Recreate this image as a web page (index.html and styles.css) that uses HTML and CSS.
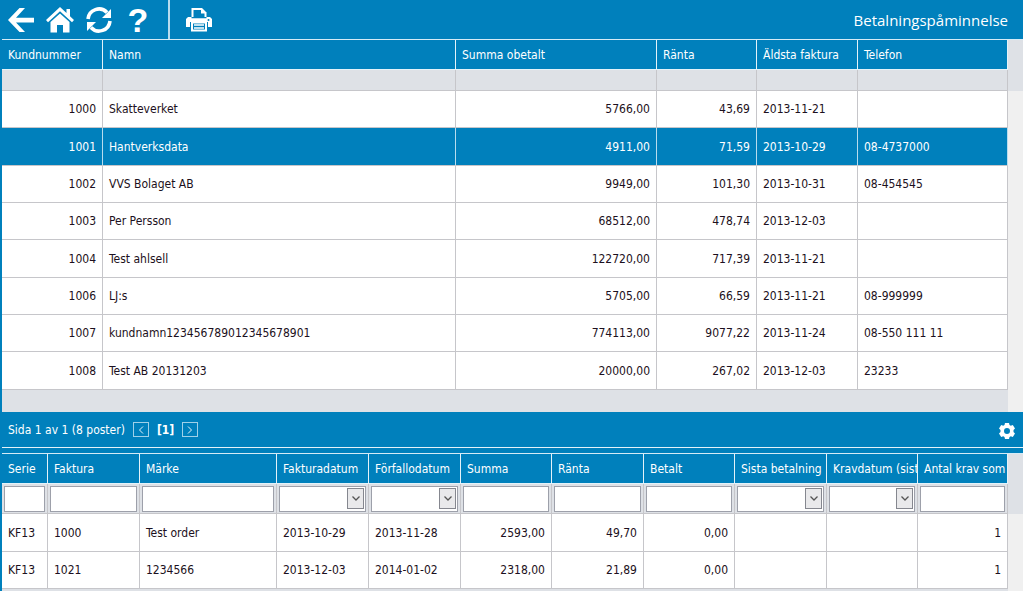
FILE: index.html
```html
<!DOCTYPE html>
<html lang="sv">
<head>
<meta charset="utf-8">
<title>Betalningspåminnelse</title>
<link rel="stylesheet" href="styles.css">
</head>
<body>
<header class="toolbar">
  <nav class="tools" aria-label="Verktyg">
    <button class="tool" type="button" aria-label="Tillbaka"><svg width="26" height="26" viewBox="0 0 26 26"><path d="M0 13 11.500 1H17L8 10.800h18v4.600H8L17 25h-5.500z" fill="#fff"/></svg></button>
    <button class="tool" type="button" aria-label="Hem"><svg width="28" height="26" viewBox="0 0 28 26"><path d="M14 0 0 13l2 2.200L14 4.200l12 11L28 13l-4-3.700V2h-3.500v4z" fill="#fff"/><path d="M14 6.500 4.500 15v10.500H11V18h6v7.500h6.500V15z" fill="#fff"/></svg></button>
    <button class="tool" type="button" aria-label="Uppdatera"><svg width="26" height="26" viewBox="0 0 26 26"><path d="M2 12A11 11 0 0 1 21 5.500" fill="none" stroke="#fff" stroke-width="3.600"/><path d="M25 2v9h-9z" fill="#fff"/><path d="M24 14A11 11 0 0 1 5 20.500" fill="none" stroke="#fff" stroke-width="3.600"/><path d="M1 24v-9h9z" fill="#fff"/></svg></button>
    <button class="tool help" type="button" aria-label="Hjälp">?</button>
  </nav>
  <div class="print-group">
    <button class="tool" type="button" aria-label="Skriv ut"><svg width="26" height="24" viewBox="0 0 26 24"><path d="M5.500 9V0H16l4.500 4.500V9z" fill="#fff"/><path d="M7.500 9V2H15v3.500h3.500V9z" fill="#0080bc"/><path d="M2 9h3.500v1.500h15V9H24l2 2v8h-4v-5.500H4V19H0v-8z" fill="#fff"/><path d="M3 10.500h20V14H3z" fill="#fff"/><path d="M6 14.500h14v8H6z" fill="#0080bc" stroke="#fff" stroke-width="2"/><path d="M8 17h10M8 20h10" stroke="#fff" stroke-width="1.500"/><circle cx="22.500" cy="12" r="1" fill="#0080bc"/></svg></button>
  </div>
  <h1 class="title">Betalningspåminnelse</h1>
</header>

<main class="content">
  <section class="panel" aria-label="Kunder">
    <div class="grid-area">
      <table class="grid customers">
        <colgroup><col class="c-number"><col><col class="c-sum"><col class="c-interest"><col class="c-date"><col class="c-phone"></colgroup>
        <thead>
          <tr><th>Kundnummer</th><th>Namn</th><th>Summa obetalt</th><th>Ränta</th><th>Äldsta faktura</th><th>Telefon</th></tr>
          <tr class="spacer"><td></td><td></td><td></td><td></td><td></td><td></td></tr>
        </thead>
        <tbody>
          <tr><td class="num">1000</td><td>Skatteverket</td><td class="num">5766,00</td><td class="num">43,69</td><td>2013-11-21</td><td></td></tr>
          <tr class="selected"><td class="num">1001</td><td>Hantverksdata</td><td class="num">4911,00</td><td class="num">71,59</td><td>2013-10-29</td><td>08-4737000</td></tr>
          <tr><td class="num">1002</td><td>VVS Bolaget AB</td><td class="num">9949,00</td><td class="num">101,30</td><td>2013-10-31</td><td>08-454545</td></tr>
          <tr><td class="num">1003</td><td>Per Persson</td><td class="num">68512,00</td><td class="num">478,74</td><td>2013-12-03</td><td></td></tr>
          <tr><td class="num">1004</td><td>Test ahlsell</td><td class="num">122720,00</td><td class="num">717,39</td><td>2013-11-21</td><td></td></tr>
          <tr><td class="num">1006</td><td>LJ:s</td><td class="num">5705,00</td><td class="num">66,59</td><td>2013-11-21</td><td>08-999999</td></tr>
          <tr><td class="num">1007</td><td>kundnamn123456789012345678901</td><td class="num">774113,00</td><td class="num">9077,22</td><td>2013-11-24</td><td>08-550 111 11</td></tr>
          <tr><td class="num">1008</td><td>Test AB 20131203</td><td class="num">20000,00</td><td class="num">267,02</td><td>2013-12-03</td><td>23233</td></tr>
        </tbody>
      </table>
    </div>
    <div class="gutter"></div>
  </section>

  <div class="pager">
    <span>Sida 1 av 1 (8 poster)</span>
    <button class="page-step" type="button" aria-label="Föregående sida"><svg width="6" height="8" viewBox="0 0 6 8"><path d="M5 0.500 1.500 4 5 7.500" fill="none" stroke="#e4f2f9"/></svg></button>
    <b>[1]</b>
    <button class="page-step" type="button" aria-label="Nästa sida"><svg width="6" height="8" viewBox="0 0 6 8"><path d="M1 0.500 4.500 4 1 7.500" fill="none" stroke="#e4f2f9"/></svg></button>
    <button class="settings" type="button" aria-label="Inställningar"><svg width="16" height="16" viewBox="0 0 16 16"><path fill="#fff" fill-rule="evenodd" d="M6 0h4l.5 2 1.300.8 2-.7L16 5.500l-1.500 1.500v2L16 10.500l-2.200 3.400-2-.7-1.300.8-.5 2H6l-.5-2-1.300-.8-2 .7L0 10.500 1.500 9V7L0 5.500l2.200-3.400 2 .7L5.500 2zM8 5a3 3 0 1 0 0 6 3 3 0 0 0 0-6z"/></svg></button>
  </div>

  <section class="panel fill" aria-label="Fakturor">
    <div class="grid-area">
      <table class="grid invoices">
        <colgroup><col class="i-series"><col class="i-wide"><col><col class="i-wide"><col class="i-wide"><col class="i-narrow"><col class="i-wide"><col class="i-narrow"><col class="i-wide"><col class="i-narrow"><col class="i-last"></colgroup>
        <thead>
          <tr><th>Serie</th><th>Faktura</th><th>Märke</th><th>Fakturadatum</th><th>Förfallodatum</th><th>Summa</th><th>Ränta</th><th>Betalt</th><th>Sista betalning</th><th>Kravdatum (sista)</th><th>Antal krav som</th></tr>
          <tr class="filters">
            <td><input type="text" aria-label="Serie"></td>
            <td><input type="text" aria-label="Faktura"></td>
            <td><input type="text" aria-label="Märke"></td>
            <td><div class="combo"><select aria-label="Fakturadatum"><option></option></select><span class="drop"><svg width="8" height="5" viewBox="0 0 8 5"><path d="M.5.500 4 4 7.500.500" fill="none" stroke="#555" stroke-width="1.300"/></svg></span></div></td>
            <td><div class="combo"><select aria-label="Förfallodatum"><option></option></select><span class="drop"><svg width="8" height="5" viewBox="0 0 8 5"><path d="M.5.500 4 4 7.500.500" fill="none" stroke="#555" stroke-width="1.300"/></svg></span></div></td>
            <td><input type="text" aria-label="Summa"></td>
            <td><input type="text" aria-label="Ränta"></td>
            <td><input type="text" aria-label="Betalt"></td>
            <td><div class="combo"><select aria-label="Sista betalning"><option></option></select><span class="drop"><svg width="8" height="5" viewBox="0 0 8 5"><path d="M.5.500 4 4 7.500.500" fill="none" stroke="#555" stroke-width="1.300"/></svg></span></div></td>
            <td><div class="combo"><select aria-label="Kravdatum"><option></option></select><span class="drop"><svg width="8" height="5" viewBox="0 0 8 5"><path d="M.5.500 4 4 7.500.500" fill="none" stroke="#555" stroke-width="1.300"/></svg></span></div></td>
            <td><input type="text" aria-label="Antal krav"></td>
          </tr>
        </thead>
        <tbody>
          <tr><td>KF13</td><td>1000</td><td>Test order</td><td>2013-10-29</td><td>2013-11-28</td><td class="num">2593,00</td><td class="num">49,70</td><td class="num">0,00</td><td></td><td></td><td class="num">1</td></tr>
          <tr><td>KF13</td><td>1021</td><td>1234566</td><td>2013-12-03</td><td>2014-01-02</td><td class="num">2318,00</td><td class="num">21,89</td><td class="num">0,00</td><td></td><td></td><td class="num">1</td></tr>
        </tbody>
      </table>
    </div>
    <div class="gutter tall"></div>
  </section>
</main>
</body>
</html>
```

FILE: styles.css
```css
* {
  box-sizing: border-box;
}

body {
  margin: 0;
  min-height: 100vh;
  display: flex;
  flex-direction: column;
  background: #0080bc;
  color: #1c1020;
  font: 12px/16px "DejaVu Sans Condensed", "DejaVu Sans", sans-serif;
}

button {
  border: 0;
  padding: 0;
  background: none;
  color: inherit;
  font: inherit;
}

svg {
  display: block;
}

.toolbar {
  display: flex;
  height: 39px;
  color: #fff;
}

.tools {
  display: flex;
  align-items: center;
  gap: 12px;
  padding: 0 19px 0 8px;
  border-right: 2px solid #b8dcee;
}

.tool {
  display: flex;
  align-items: center;
  justify-content: center;
}

.help {
  width: 22px;
  margin-left: 3px;
  font: bold 34px/40px "Liberation Sans", Arial, sans-serif;
}

.print-group {
  display: flex;
  padding-left: 16px;
}

.title {
  margin: 0 15px 0 auto;
  font: 15px/40px "Open Sans", "Noto Sans", sans-serif;
}

.content {
  flex: 1;
  display: flex;
  flex-direction: column;
  padding-left: 2px;
}

.panel {
  display: flex;
  border-top: 1px solid #d5ebf6;
}

.fill {
  flex: 1;
}

.grid-area {
  flex: 1;
  min-width: 0;
  padding-bottom: 22px;
  background: #dee1e6;
}

.fill .grid-area {
  padding-bottom: 0;
}

.gutter {
  width: 15px;
  background: linear-gradient(#dee1e6 51px, #f0f0f0 51px);
}

.gutter.tall {
  background: linear-gradient(#dee1e6 60px, #f0f0f0 60px);
}

.grid {
  width: 100%;
  table-layout: fixed;
  border-collapse: separate;
  border-spacing: 0;
}

.c-number,
.c-date {
  width: 101px;
}

.c-sum {
  width: 201px;
}

.c-interest {
  width: 100px;
}

.c-phone {
  width: 150px;
}

.i-series {
  width: 46px;
}

.i-wide {
  width: 92px;
}

.i-narrow {
  width: 91px;
}

.i-last {
  width: 90px;
}

.grid th,
.grid td {
  overflow: hidden;
  padding: 0 6px;
  white-space: nowrap;
  text-align: left;
}

.grid th {
  height: 30px;
  border-right: 1px solid #e4f2f9;
  border-bottom: 1px solid #e4f2f9;
  background: #0080bc;
  color: #fff;
  font-weight: normal;
}

.invoices th:last-child {
  padding-right: 0;
}

.grid td {
  height: 37px;
  border-right: 1px solid #c6c6ca;
  border-bottom: 1px solid #c6c6ca;
  background: #fff;
}

.customers tbody tr:nth-child(3n + 2) td,
.invoices tbody tr:nth-child(3n + 1) td {
  height: 38px;
}

.grid .num {
  text-align: right;
}

.grid .selected td {
  border-right-color: #b8dcee;
  background: #0080bc;
  color: #fff;
}

.grid .spacer td {
  height: 21px;
  background: #dee1e6;
}

.grid .filters td {
  height: 30px;
  padding: 1px 2px;
  background: #dee1e6;
}

.filters input,
.combo {
  display: flex;
  width: 100%;
  height: 26px;
  border: 1px solid #9da0aa;
  background: #fff;
}

.filters input {
  padding: 0 2px;
  font: inherit;
}

.combo {
  align-items: center;
  padding-right: 1px;
}

.combo select {
  flex: 1;
  min-width: 0;
  height: 100%;
  border: 0;
  background: none;
  appearance: none;
}

.drop {
  display: flex;
  align-items: center;
  justify-content: center;
  width: 17px;
  height: 21px;
  border: 1px solid #85878f;
  background: #e9e9eb;
  pointer-events: none;
}

.pager {
  display: flex;
  align-items: center;
  gap: 8px;
  height: 35px;
  margin-bottom: 6px;
  padding: 0 8px 0 6px;
  box-shadow: 0 1px #e4f2f9;
  color: #fff;
}

.page-step {
  display: flex;
  align-items: center;
  justify-content: center;
  width: 16px;
  height: 15px;
  border: 1px solid #9fd0e8;
}

.settings {
  margin-left: auto;
  padding-top: 3px;
}
```
